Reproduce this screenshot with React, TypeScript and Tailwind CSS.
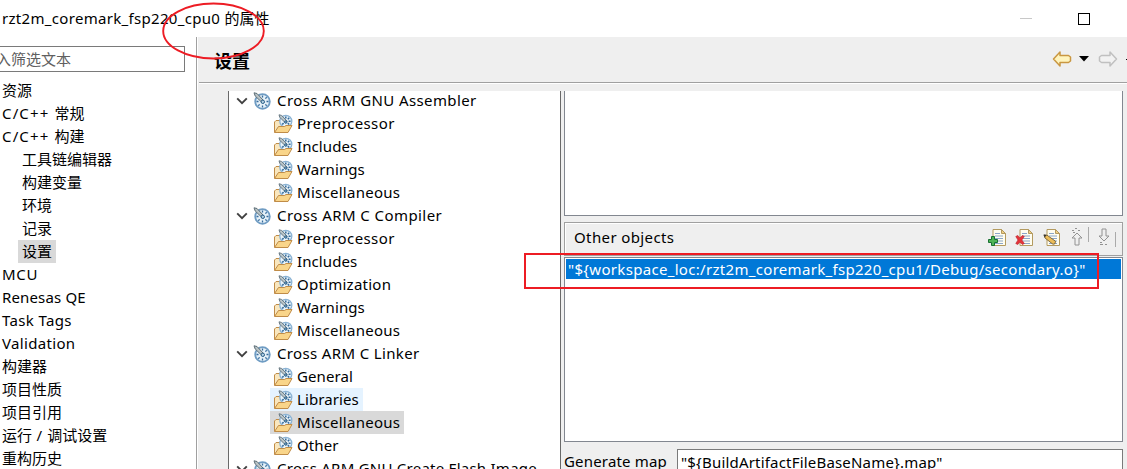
import type { ReactNode } from "react";

function Gauge() {
  return (
    <svg viewBox="0 0 18 18" className="h-[18px] w-[18px]">
      <circle cx="9.5" cy="9.5" r="7.3" fill="#e6f1f8" stroke="#6f9cc3" strokeWidth="1.8" />
      <path d="M9.5 3.5v2M9.5 13.5v2M3.5 9.5h2M13.5 9.5h2M5.3 13.7l1.3-1.3M12.4 6.6l1.3-1.3M12.4 12.4l1.3 1.3" stroke="#356b9c" strokeWidth="1.3" />
      <path d="M1 0.8L4 1.5L10 8L8.5 10L2.2 4Z" fill="#b9c3c6" stroke="#5f7078" strokeWidth="1" />
      <circle cx="9.8" cy="9.8" r="1.7" fill="#b6d2e5" stroke="#275d86" />
    </svg>
  );
}

function FolderIcon() {
  return (
    <svg viewBox="0 0 20 20" className="h-5 w-5 shrink-0">
      <path d="M1.5 18V8L3 6.5h4l1.5 2V16Z" fill="#f9e7bf" stroke="#c08c48" />
      <circle cx="12.8" cy="7.3" r="6" fill="#e8f3fa" stroke="#8bb3d4" strokeWidth="1.3" />
      <path d="M12.8 2.5v2M17.6 7.3h-2M16.2 3.9l-1.4 1.4M16.2 10.5l-1.4-1.4M9.2 10.5l1.4-1.4" stroke="#356b9c" strokeWidth="1.5" />
      <path d="M6 .8l2.5.6 5.7 5.8-1.5 2L6.7 3.2Z" fill="#bac5c9" stroke="#60717b" strokeWidth=".9" />
      <circle cx="12.8" cy="8" r="1.2" fill="#8bb3d4" stroke="#275d86" />
      <path d="M1.5 18.5L5.5 12.5h6l1.5-1h6l-4 7Z" fill="#f9d58a" stroke="#c08c48" strokeLinejoin="round" />
    </svg>
  );
}

function Chevron() {
  return (
    <svg viewBox="0 0 12 8" className="h-2 w-3 shrink-0">
      <path d="M1.2 1.4L6 6.2l4.8-4.8" fill="none" stroke="#404040" strokeWidth="1.9" />
    </svg>
  );
}

function Group({ label, spacing }: { label: string; spacing: string }) {
  return (
    <div className="flex h-[23px] shrink-0 items-center pl-[7px]">
      <Chevron />
      <div className="ml-[5px] flex h-[18px] w-[18px] shrink-0"><Gauge /></div>
      <span className={`ml-[6px] whitespace-nowrap ${spacing}`}>{label}</span>
    </div>
  );
}

function Leaf({ label, spacing = "tracking-[0.1px]", tone = "" }: { label: string; spacing?: string; tone?: string }) {
  return (
    <div className="flex h-[23px] shrink-0 pl-[41px]">
      <div className={`flex items-center pr-1 pl-[3px] ${tone}`}>
        <FolderIcon />
        <span className={`ml-1 whitespace-nowrap ${spacing}`}>{label}</span>
      </div>
    </div>
  );
}

function NavItem({ children, nested = false, selected = false, spacing = "" }: { children: ReactNode; nested?: boolean; selected?: boolean; spacing?: string }) {
  return (
    <div className={`flex h-[23px] shrink-0 ${nested ? "pl-[18px]" : ""}`}>
      <span className={`flex items-center whitespace-pre ${nested ? "px-1" : "pl-[2px]"} ${spacing} ${selected ? "bg-[#d9d9d9]" : ""}`}>{children}</span>
    </div>
  );
}

function Page({ children }: { children: ReactNode }) {
  return (
    <svg viewBox="0 0 19 19" className="h-[19px] w-[19px]">
      <path d="M5 1.5h8.5l4 4v12H5Z" fill="#fffdf0" stroke="#b39a5f" />
      <path d="M13.5 1.5v4h4Z" fill="#f1cf85" stroke="#b39a5f" />
      <path d="M7 5.5h5M7 8h8M7 10.5h8M7 13h8M7 15.5h8" stroke="#8ba6c9" />
      {children}
    </svg>
  );
}

function Toolbar() {
  return (
    <div className="flex items-center">
      <Page><path d="M3.5 8.5h3v3h3v3h-3v3h-3v-3h-3v-3h3Z" fill="#4fb455" stroke="#187032" /></Page>
      <div className="ml-2"><Page><path d="M.8 8.5l2-1 2 2.5 2.5-2.5 2 1-2.5 3.5 2.5 3.5-2 1-2.5-2.5-2 2.5-2-1L3 12Z" fill="#e4343a" stroke="#c12731" strokeWidth=".7" /></Page></div>
      <div className="ml-2"><Page><path d="M2 7l3 .2 8.5 6-.5 2.5-2 .6L3 10Z" fill="#edbd58" stroke="#766036" strokeWidth=".9" /><path d="M1.5 6.5l3 .6-1.7 2.3Z" fill="#333" /></Page></div>
      <svg viewBox="0 0 14 20" className="ml-[9px] h-5 w-[14px]" fill="none" stroke="#929292">
        <path d="M7 6l5 5H9v7H5v-7H2Z" /><path d="M5 1.5h2M2 3.5h2m4 0h2M3 5.5h2" />
      </svg>
      <div className="mb-[5px] ml-[4px] h-[15px] w-px bg-[#aaa]" />
      <svg viewBox="0 0 14 20" className="mb-px ml-[8px] h-5 w-[14px]" fill="none" stroke="#929292">
        <path d="M7 14L2 9h3V2h4v7h3Z" /><path d="M3 15.5h2M3 17.5h3m2 0h2" />
      </svg>
      <div className="mt-1 ml-[4px] h-[15px] w-px bg-[#aaa]" />
    </div>
  );
}

export default function App() {
  return (
    <div className="relative flex h-[469px] w-[1127px] flex-col overflow-hidden bg-white font-['Noto_Sans','Noto_Sans_CJK_SC',sans-serif] text-[15px] leading-[23px] text-black">
      <header className="flex h-[37px] shrink-0 items-center justify-between pl-[2px]">
        <div className="flex whitespace-pre"><span className="tracking-[0.31px]">rzt2m_coremark_fsp220_cpu0 </span><span>的属性</span></div>
        <div className="flex items-center pr-[37px]">
          <div className="mr-[46px] h-px w-3 bg-[#c8c8c8]" />
          <div className="h-3 w-3 border border-black" />
        </div>
      </header>
      <div className="flex min-h-0 flex-1">
        <aside className="flex w-[197px] shrink-0 flex-col border-r border-[#a0a0a0]">
          <div className="mt-[9px] flex h-[26px] w-[185px] shrink-0 items-center overflow-hidden border border-l-0 border-[#7a7a7a] text-[#606060]"><span className="-ml-[4px]">入筛选文本</span></div>
          <nav className="mt-[7px] flex min-h-0 flex-1 flex-col overflow-hidden">
            <NavItem>资源</NavItem>
            <NavItem><span className="tracking-[1.15px]">C/C++ </span>常规</NavItem>
            <NavItem><span className="tracking-[1.15px]">C/C++ </span>构建</NavItem>
            <NavItem nested>工具链编辑器</NavItem>
            <NavItem nested>构建变量</NavItem>
            <NavItem nested>环境</NavItem>
            <NavItem nested>记录</NavItem>
            <NavItem nested selected>设置</NavItem>
            <NavItem spacing="tracking-[0.7px]">MCU</NavItem>
            <NavItem spacing="tracking-[0.15px]">Renesas QE</NavItem>
            <NavItem spacing="tracking-[0.35px]">Task Tags</NavItem>
            <NavItem spacing="tracking-[0.33px]">Validation</NavItem>
            <NavItem>构建器</NavItem>
            <NavItem>项目性质</NavItem>
            <NavItem>项目引用</NavItem>
            <NavItem>运行<span className="tracking-[0.6px]"> / </span>调试设置</NavItem>
            <NavItem>重构历史</NavItem>
          </nav>
        </aside>
        <main className="ml-px flex min-w-0 flex-1 flex-col bg-[#efefef]">
          <div className="ml-px flex h-[47px] shrink-0 items-center justify-between border-b border-white pl-[15px] shadow-[inset_0_-1px_0_#a0a0a0]">
            <h1 className="pt-[3px] text-[18px] font-bold">设置</h1>
            <div className="flex items-center pb-[2px]">
              <svg viewBox="0 0 20 18" className="h-[18px] w-5"><path d="M1.5 9L8 2v3.5h8.5l2 1.5v4l-2 1.5H8V16Z" fill="#fff4bd" stroke="#c99742" strokeWidth="1.5" strokeLinejoin="round" /></svg>
              <svg viewBox="0 0 10 6" className="ml-[7px] h-[6px] w-[10px]"><path d="M0 0h10L5 5.5Z" /></svg>
              <svg viewBox="0 0 20 18" className="ml-[9px] h-[18px] w-5"><path d="M18.5 9L12 2v3.5H3.5L1.5 7v4l2 1.5H12V16Z" fill="#f2f2f2" stroke="#c0c0c0" strokeWidth="1.5" strokeLinejoin="round" /></svg>
              <div className="ml-[8px] h-px w-px bg-black" />
            </div>
          </div>
          <div className="mt-[7px] flex min-h-0 flex-1">
            <section className="ml-[30px] flex w-[333px] shrink-0 flex-col overflow-hidden border-x border-[#696969] bg-white">
              <div className="-mt-[2px] flex flex-col">
                <Group label="Cross ARM GNU Assembler" spacing="tracking-[0.4px]" />
                <Leaf label="Preprocessor" spacing="tracking-[0.4px]" />
                <Leaf label="Includes" />
                <Leaf label="Warnings" />
                <Leaf label="Miscellaneous" spacing="tracking-[0.27px]" />
                <Group label="Cross ARM C Compiler" spacing="tracking-[0.42px]" />
                <Leaf label="Preprocessor" spacing="tracking-[0.4px]" />
                <Leaf label="Includes" />
                <Leaf label="Optimization" spacing="tracking-[0.25px]" />
                <Leaf label="Warnings" />
                <Leaf label="Miscellaneous" spacing="tracking-[0.27px]" />
                <Group label="Cross ARM C Linker" spacing="tracking-[0.35px]" />
                <Leaf label="General" />
                <Leaf label="Libraries" tone="bg-[#e5f3ff]" />
                <Leaf label="Miscellaneous" spacing="tracking-[0.27px]" tone="bg-[#d9d9d9]" />
                <Leaf label="Other" />
                <Group label="Cross ARM GNU Create Flash Image" spacing="tracking-[0.25px]" />
              </div>
            </section>
            <section className="ml-[3px] flex w-[559px] shrink-0 flex-col">
              <div className="h-[125px] shrink-0 border border-t-0 border-[#828790] bg-white" />
              <div className="mt-[6px] flex h-[34px] shrink-0 items-center justify-between border border-[#a0a0a0] pr-[6px] pb-[4px] pl-[9px] shadow-[inset_1px_1px_0_white]">
                <span className="tracking-[0.38px]">Other objects</span><Toolbar />
              </div>
              <div className="mt-px h-[185px] shrink-0 border border-[#828790] bg-white p-px">
                <div className="flex h-5 items-center bg-[#0078d7] pl-[2px] tracking-[0.31px] whitespace-nowrap text-white">"${"{"}workspace_loc:/rzt2m_coremark_fsp220_cpu1/Debug/secondary.o{"}"}"</div>
              </div>
              <div className="mt-[7px] flex h-[27px] shrink-0">
                <span className="w-[113px] shrink-0 pt-px tracking-[0.18px]">Generate map</span>
                <div className="flex-1 border border-[#7a7a7a] bg-white pt-px pl-[3px] tracking-[0.19px]">"${"{"}BuildArtifactFileBaseName{"}"}.map"</div>
              </div>
            </section>
          </div>
        </main>
      </div>
      <svg viewBox="0 0 104 60" className="pointer-events-none absolute top-px left-[162px] h-[60px] w-[104px]"><ellipse cx="51.5" cy="30" rx="50.3" ry="27.5" fill="none" stroke="#ed1c24" strokeWidth="1.9" /></svg>
      <div className="pointer-events-none absolute top-[253px] left-[524px] h-9 w-[575px] border-2 border-[#ed1c24]" />
    </div>
  );
}
